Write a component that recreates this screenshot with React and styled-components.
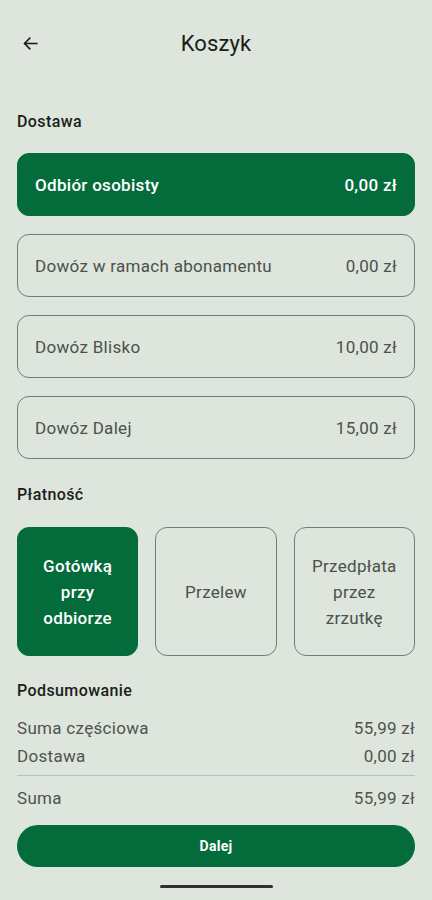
import React from "react";
import styled, { createGlobalStyle } from "styled-components";

const Global = createGlobalStyle`
  html, body { margin: 0; padding: 0; background: #dde5dc; }
  body { font-family: Roboto, "Noto Sans", sans-serif; -webkit-font-smoothing: antialiased; }
  * { box-sizing: border-box; }
`;

const GREEN = "#046b3b";

const Page = styled.div`
  width: 432px;
  height: 900px;
  background: #dde5dc;
  display: flex;
  flex-direction: column;
  padding: 0 17px;
`;

const Header = styled.header`
  position: relative;
  height: 50px;
  margin-top: 18px;
  display: flex;
  align-items: center;
  justify-content: center;
`;

const BackButton = styled.button`
  position: absolute;
  left: 3px;
  top: 50%;
  transform: translateY(-50%);
  background: none;
  border: none;
  padding: 0;
  width: 20px;
  height: 20px;
  display: flex;
  align-items: center;
  justify-content: center;
  color: #1a1c1a;
`;

const Title = styled.h1`
  margin: 0;
  font-size: 22px;
  font-weight: 400;
  color: #1a1c1a;
  letter-spacing: 0.1px;
`;

const SectionLabel = styled.div`
  font-size: 16px;
  line-height: 20px;
  font-weight: 500;
  letter-spacing: 0.4px;
  color: #1b1d1b;
  margin-top: ${(p) => p.$mt}px;
`;

const OptionList = styled.div`
  display: flex;
  flex-direction: column;
  gap: 18px;
  margin-top: 21px;
`;

const Option = styled.div`
  height: 63px;
  border-radius: 12px;
  display: flex;
  align-items: center;
  justify-content: space-between;
  padding: 0 17px;
  font-size: 17px;
  letter-spacing: 0.3px;
  background: ${(p) => (p.$active ? GREEN : "transparent")};
  border: 1px solid ${(p) => (p.$active ? GREEN : "#747d75")};
  color: ${(p) => (p.$active ? "#ffffff" : "#4b514c")};
  font-weight: ${(p) => (p.$active ? 500 : 400)};
`;

const TileRow = styled.div`
  display: grid;
  grid-template-columns: repeat(3, 1fr);
  gap: 17px;
  margin-top: 22px;
`;

const Tile = styled.div`
  height: 129px;
  border-radius: 12px;
  display: flex;
  align-items: center;
  justify-content: center;
  text-align: center;
  padding: 0 12px;
  font-size: 17px;
  letter-spacing: 0.3px;
  line-height: 26px;
  background: ${(p) => (p.$active ? GREEN : "transparent")};
  border: 1px solid ${(p) => (p.$active ? GREEN : "#747d75")};
  color: ${(p) => (p.$active ? "#ffffff" : "#4b514c")};
  font-weight: ${(p) => (p.$active ? 500 : 400)};
`;

const Summary = styled.div`
  display: flex;
  flex-direction: column;
  margin-top: 13px;
`;

const SumRow = styled.div`
  display: flex;
  justify-content: space-between;
  font-size: 17px;
  letter-spacing: 0.3px;
  line-height: 28px;
  color: #4e544f;
`;

const Divider = styled.div`
  height: 1px;
  background: #b9c2ba;
  margin: 5px 0 8px;
`;

const NextButton = styled.button`
  margin-top: 13px;
  height: 42px;
  width: 100%;
  border: none;
  border-radius: 21px;
  background: ${GREEN};
  color: #fff;
  font-family: Roboto, sans-serif;
  font-weight: 700;
  font-size: 14px;
  letter-spacing: 0.3px;
`;

const HomeBar = styled.div`
  width: 113px;
  height: 3px;
  border-radius: 2px;
  background: #2d302d;
  align-self: center;
  margin-top: 18px;
`;

const deliveries = [
  { name: "Odbiór osobisty", price: "0,00 zł", active: true },
  { name: "Dowóz w ramach abonamentu", price: "0,00 zł" },
  { name: "Dowóz Blisko", price: "10,00 zł" },
  { name: "Dowóz Dalej", price: "15,00 zł" },
];

const payments = [
  { label: "Gotówką przy odbiorze", active: true },
  { label: "Przelew" },
  { label: "Przedpłata przez zrzutkę" },
];

export default function App() {
  return (
    <>
      <Global />
      <Page>
        <Header>
          <BackButton aria-label="Wstecz">
            <svg width="17" height="17" viewBox="0 0 24 24" fill="none" stroke="currentColor" strokeWidth="2.2" strokeLinecap="square">
              <path d="M21 12H4" />
              <path d="M11 4.5L3.5 12L11 19.5" />
            </svg>
          </BackButton>
          <Title>Koszyk</Title>
        </Header>

        <SectionLabel $mt={44}>Dostawa</SectionLabel>
        <OptionList>
          {deliveries.map((d) => (
            <Option key={d.name} $active={d.active}>
              <span>{d.name}</span>
              <span>{d.price}</span>
            </Option>
          ))}
        </OptionList>

        <SectionLabel $mt={26}>Płatność</SectionLabel>
        <TileRow>
          {payments.map((p) => (
            <Tile key={p.label} $active={p.active}>
              {p.label}
            </Tile>
          ))}
        </TileRow>

        <SectionLabel $mt={25}>Podsumowanie</SectionLabel>
        <Summary>
          <SumRow>
            <span>Suma częściowa</span>
            <span>55,99 zł</span>
          </SumRow>
          <SumRow>
            <span>Dostawa</span>
            <span>0,00 zł</span>
          </SumRow>
          <Divider />
          <SumRow>
            <span>Suma</span>
            <span>55,99 zł</span>
          </SumRow>
        </Summary>
        <NextButton>Dalej</NextButton>
        <HomeBar />
      </Page>
    </>
  );
}
